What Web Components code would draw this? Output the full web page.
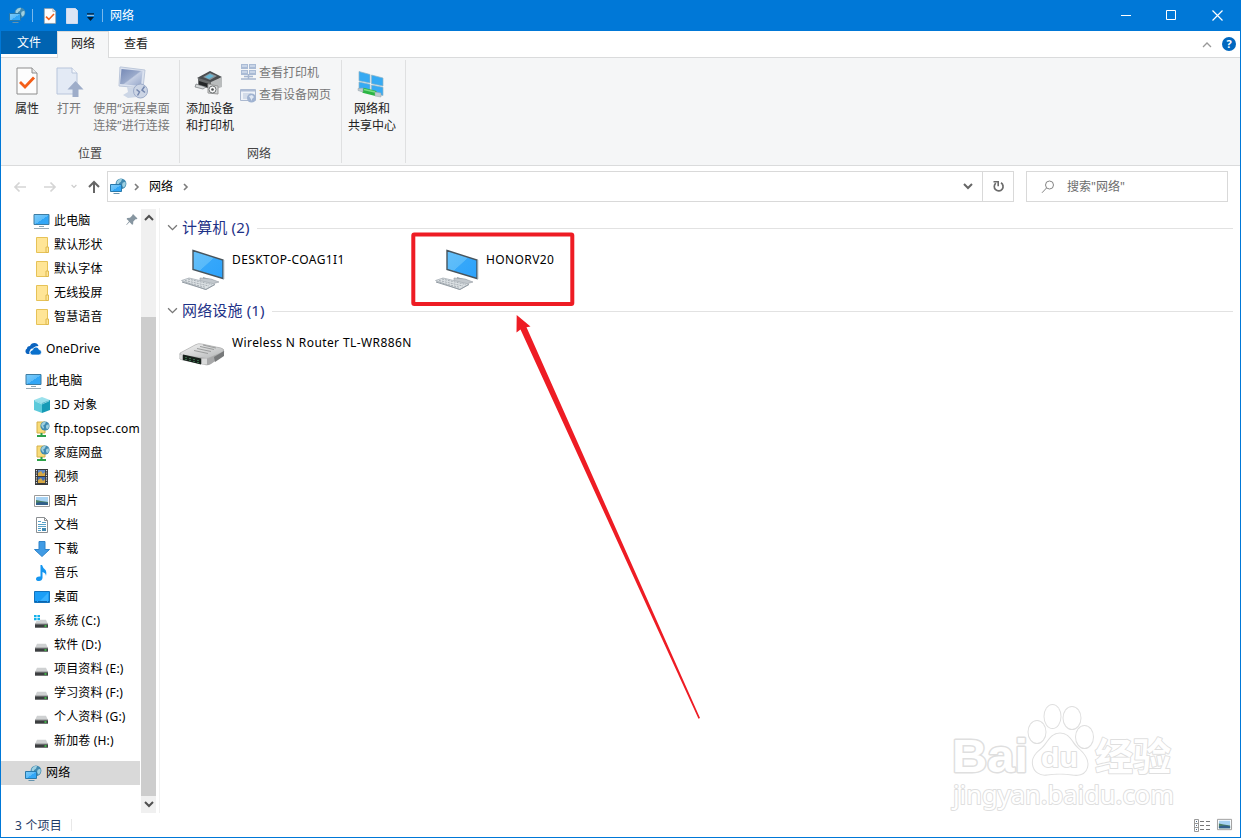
<!DOCTYPE html>
<html lang="zh-CN">
<head>
<meta charset="utf-8">
<title>网络</title>
<style>
  body {
    margin: 0;
    width: 1241px;
    height: 838px;
    overflow: hidden;
    font: 12px/17px "Noto Sans", "Noto Sans CJK SC", sans-serif;
    color: #000;
  }
</style>
</head>
<body>
<explorer-window></explorer-window>

<script>
  // icons, drawn on the pixel grid of their own viewBox: [width, height, markup]
  const drive = '<path d="M3 6.700h9l2 4.300H1z" fill="#cfd1d2"/><path d="M1 11h13v3.700H1z" fill="#3c3e40"/><path d="M1 11h13" stroke="#8d8f91"/><path d="M10.500 13h2" stroke="#3fe04a" stroke-width="1.400"/>';
  const globe = (x, y, r) => `<g transform="translate(${x} ${y}) scale(${r / 5})"><circle r="5" fill="#4089b0"/><path d="M-4-2q2-3 5-2.500L0-2l-2 1.500L-1 2l-1 1-2-3zM1.500-1L4-2q1 3-1 5L2 3.500 1 1z" fill="#9fd0e0"/></g>`;
  const ftp = `<path d="M3 1h8v11H3z" fill="#f8dc79" stroke="#d6b04a"/>${globe(11, 5, 4.6)}<path d="M7.500 12v3M3 15h9" stroke="#2da149" stroke-width="2"/>`;
  const monitor = '<path d="M1 1.500h15v10H1z" fill="url(#g)" stroke="#3e7da3"/><path d="M6 13.500h5" stroke="#8ba5b3"/><path d="M1 15.500h15" stroke="#9aabb5"/>';
  const blue = '<defs><linearGradient id="g" x2="1" y2="1"><stop stop-color="#7cccfb"/><stop offset=".52" stop-color="#5dbcf8"/><stop offset=".53" stop-color="#30a6f6"/><stop offset="1" stop-color="#36a8f7"/></linearGradient></defs>';
  const photo = '<path d="M.5 2.500h15v11H.5z" fill="#fff" stroke="#9b9b9b"/><path d="M2 4h12v8H2z" fill="#a8d3f3"/><path d="M2 7l5 1 7 1v3H2z" fill="#4b8065"/><path d="M2 10q6-2 12 0v2H2z" fill="#315f8b"/>';

  const icons = {
    network: [17, 17, blue + globe(11, 5.800, 5.4) + '<path d="M.5 6.500h11v7H.5z" fill="url(#g)" stroke="#2979aa"/><path d="M3.500 15.500h6" stroke="#6593ae"/>'],
    monitor: [17, 17, blue + monitor],
    folder: [15, 16, '<path d="M2.500.5h11v15h-11z" fill="#ffe596" stroke="#e6c257"/><path d="M12 10h2.500v5.500H12z" fill="#ffe596" stroke="#dfb94e"/>'],
    onedrive: [17, 12, '<path d="M2.500 11a3 3 0 0 1-.5-5.500Q2 3 5 3 6 0 9.500 0q3 0 4 3-4 0-5 2.500Q4 5 4.500 11z" fill="#0a63bf"/><path d="M7 12q-2-.3-2-2.500T7.500 7Q8 4 11 4q2.500 0 3 2.500 2.500.3 2.500 2.700T14 12z" fill="#0a71cd" stroke="#fff" stroke-width=".7"/>'],
    cube: [16, 16, '<path d="M8 0l8 3-8 3-8-3z" fill="#9be1ec"/><path d="M0 3l8 3v10l-8-3z" fill="#5ccadb"/><path d="M16 3L8 6v10l8-3z" fill="#169bb6"/><path d="M1 4l7 3 7-3" stroke="#c8f2f6" fill="none" stroke-width=".6"/>'],
    ftp: [16, 16, ftp],
    video: [15, 16, '<path d="M1 0h13v16H1z" fill="#37393b"/><path d="M4 1h7v6H4z" fill="#608bc8"/><path d="M4 8h7v6H4z" fill="#416db3"/><path d="M4 4l3-2 2 3 2-2v4H4zM4 11l3-2 2 3 2-2v4H4z" fill="#d7a843"/><path d="M2.500 1v14M12.500 1v14" stroke="#d9dbdd" stroke-width="1.200" stroke-dasharray="1.200 1.200"/>'],
    photo: [16, 16, photo],
    doc: [14, 16, '<path d="M1.500.5h8l3 3v12h-11z" fill="#fff" stroke="#8b8f92"/><path d="M9.500.5v3h3" fill="none" stroke="#8b8f92"/><path d="M3 4.500h3M7 5.500h4M3 7.500h8M3 9.500h8M3 11.500h3M3 13.500h3" stroke="#58a2c9"/><path d="M7 11h4v3H7z" fill="#4289b1"/>'],
    down: [16, 16, '<path d="M5 .5h6v8h4.500L8 15.500.5 8.500H5z" fill="#409be4" stroke="#2d83ca"/>'],
    music: [14, 16, '<path d="M7 0q1 3 3 4.500T11 11q0-3-3.500-4v6Q7 16 4 16t-3-2q0-3 4.500-2.500V0z" fill="#1596f0"/>'],
    desktop: [16, 16, '<path d="M.5 2.500h15v11H.5z" fill="#1b9ef7" stroke="#1272bd"/><path d="M6 12l8-8v8z" fill="#38b1ff"/><path d="M1 12.500h14" stroke="#0c65ae" stroke-dasharray="2 1 9 1"/>'],
    drive: [15, 16, drive],
    sysdrive: [15, 16, drive + '<path d="M0 2h6v6H0z" fill="#fff"/><path d="M0 2h2.600v2.300H0zM3.400 2H6v2.300H3.400zM0 5h2.600v2.300H0zM3.400 5H6v2.300H3.400z" fill="#13b1eb"/>'],
    pin: [12, 12, '<path d="M7 0l4.500 4.500-1 .8-1 0L7.300 7.500l-.2 2.700-1 .6L3.500 8 .7 11l-.5-.3L3 7.300.6 5l.6-1L4 3.800 6 1.700z" fill="#8796a1"/>'],
    check: [22, 28, '<path d="M1 1h15l5 5v21H1z" fill="#fdfdfd" stroke="#8d8d8d"/><path d="M16 1v5h5" fill="#e9e9e9" stroke="#8d8d8d"/><path d="M4 15l5 5L18 10.500" fill="none" stroke="#f45e18" stroke-width="2.800"/>'],
    open: [26, 31, '<path d="M1 1h15l5 5v21H1z" fill="#e3eaf5" stroke="#b8c5db"/><path d="M16 1v5h5" fill="#f4f7fc" stroke="#b8c5db"/><path d="M19.500 14l8 8.500h-5V30h-6v-7.500h-5z" fill="#9eadc9"/>'],
    remote: [29, 32, '<defs><linearGradient id="r" x2="1" y2="1"><stop stop-color="#7488b5"/><stop offset=".5" stop-color="#9aaacb"/><stop offset=".55" stop-color="#c4cee3"/><stop offset="1" stop-color="#94a5c9"/></linearGradient></defs><path d="M3 0h1l24 3-2 18-24-2z" fill="#dbe2ef" stroke="#bcc7da"/><path d="M4.500 2l21 2-1.500 15L3 17z" fill="url(#r)"/><path d="M10 20l7 1v5l3 4-9 1-5-3 5-3z" fill="#ccd6e6"/><circle cx="23.500" cy="24" r="7" fill="#ccd5e5" stroke="#9cabc9"/><path d="M19.500 22.500l3 2.500-2 3.500M27.500 19.500l-2.500 3.500 3 2.500" stroke="#7588af" fill="none" stroke-width="1.500"/>'],
    printer: [32, 28, '<path d="M3 8L16 1l12 6-11 7z" fill="#494c4f"/><path d="M9 7l7-4 7 3-7 4z" fill="#89939a"/><path d="M11 7l5-3 4 2-5 3z" fill="#67b7d4"/><path d="M4 8l13 4v7L4 15z" fill="#696c6d"/><path d="M17 12l11-5v10l-11 4z" fill="#b9bcbd"/><path d="M5 11l10 3v4L5 15z" fill="#252728"/><path d="M2 14l10 3-3 2-8-2z" fill="#d4d7d8" stroke="#626669" stroke-width=".6"/><path d="M14 14l10 2v8l-10-1z" fill="#d3d6d7" stroke="#999"/><circle cx="18.500" cy="19.500" r="3.500" fill="#f8f8f8" stroke="#707475"/><circle cx="18.500" cy="19.500" r="1.300" fill="#45494a"/>'],
    printers: [16, 16, '<path d="M1 0h7v5H1zM9 0h7v5H9zM1 6h7v5H1zM9 6h7v5H9z" fill="#aabbd5"/><path d="M2 1h5v2H2zM10 1h5v2h-5zM2 7h5v2H2zM10 7h5v2h-5z" fill="#c9d5e7"/><path d="M8.500 10v5M4 12.500h9M1 15h15" stroke="#a6b6d0" fill="none" stroke-width="1.500"/>'],
    webpage: [16, 13, '<path d="M.5 1.500h15v11H.5z" fill="#eef2f8" stroke="#abb9d0"/><path d="M1 2.500h14" stroke="#aebdd6" stroke-width="2"/><path d="M3 6h8M3 8h6M3 10h5" stroke="#b7c5da"/><circle cx="11.500" cy="10" r="4.500" fill="#a0b3d1"/><path d="M9 8l3-1 2 2-2 2v2z" fill="#e0e8f3"/>'],
    sharing: [28, 27, '<path d="M1 1.500l11 3V13L1 10.800zM13.500 5l11.500 3v8l-11.500-2.300zM1 12l11 2.300v8.200L1 20.500zM13.500 15L25 17.300v8.200l-11.500-2.700z" fill="#36aaf3" stroke="#8fb4c6" stroke-width=".7"/><path d="M5 20.300l13 3.200" stroke="#2bb543" stroke-width="5"/><path d="M6 19.500l11 2.500" stroke="#79dd86" stroke-width="1.300"/><path d="M0 18.500l5-.5v4l-5-1.500zM17 22l6 1v4l-6-1z" fill="#c1cacf" stroke="#97a4ab" stroke-width=".5"/>'],
    pc: [44, 44, '<defs><linearGradient id="p" x1="0" y1="0" x2="1" y2="1"><stop stop-color="#65c0fa"/><stop offset=".47" stop-color="#58bafa"/><stop offset=".48" stop-color="#35a7fa"/><stop offset="1" stop-color="#2ca2fb"/></linearGradient></defs><path d="M22 28l10 3-1 4-9-2z" fill="#9ba6ae"/><path d="M19 29l11 1 8 3-7 2-12-3z" fill="#c2c8cd" stroke="#949ba1" stroke-width=".6"/><path d="M12 1.500l30 9.500v18.500l-30-9z" fill="url(#p)" stroke="#47545d" stroke-width="1.400"/><path d="M42.800 11v19" stroke="#a2aeb5"/><path d="M.5 31.500L8 29l26 6-9.500 5.500z" fill="#dce1e4" stroke="#aab1b7" stroke-width=".8"/><path d="M4 31.500l24 5.500M7 30l24 5.500M1.500 32.800l23 5.500" stroke="#a0a8af" stroke-width=".9" stroke-dasharray="2 1"/><path d="M1 33l24 7.500 9-5" fill="none" stroke="#929ba3"/>'],
    router: [48, 24, '<defs><linearGradient id="t" x2="1" y2="1"><stop stop-color="#f4f4f4"/><stop offset="1" stop-color="#b4b6b7"/></linearGradient></defs><path d="M1 12L17 3q3-2 7-1l19 4q4 1 3 5v2L33 22q-3 2-6 1L3 18q-2-1-2-3z" fill="#a7a8a9"/><path d="M2 11L17 3q3-2 7-1l19 4q4 1 2 4L31 16q-2 1-5 0L3 13z" fill="url(#t)" stroke="#aaa" stroke-width=".6"/><path d="M5 12.500l18 4v6L5 18z" fill="#17201b"/><path d="M1 12l3 1v5l-3-2zM24 16.500h5v6h-5z" fill="#d9dada"/><path d="M8 15v3M12 16v3M16 17v3M20 18v3" stroke="#54af73" stroke-dasharray="1 1"/><path d="M22 4.500l14 3M19 6.500l14 3M16 8.500l14 3M25 3l13 3" stroke="#9b9d9d"/><path d="M36 15l10-6v5l-9 6z" fill="#77797a"/>'],
    back: [14, 12, '<path d="M13 6H2M6.500 1.500L2 6l4.500 4.500" fill="none" stroke="#d5d5d5" stroke-width="1.700"/>'],
    forward: [14, 12, '<path d="M1 6h11M7.500 1.500L12 6l-4.500 4.500" fill="none" stroke="#d5d5d5" stroke-width="1.700"/>'],
    up: [12, 14, '<path d="M6 13V2M1 7l5-5 5 5" fill="none" stroke="#666" stroke-width="2"/>'],
    chevron: [10, 7, '<path d="M1 1l4 4 4-4" fill="none" stroke="currentColor" stroke-width="var(--w, 2)"/>'],
    crumb: [6, 8, '<path d="M1 1l3 3-3 3" fill="none" stroke="#7c7c7c" stroke-width="1.600"/>'],
    refresh: [12, 13, '<path d="M2.800 3.200A4.400 4.400 0 1 0 8 2.800" fill="none" stroke="#6b6b6b" stroke-width="1.700"/><path d="M.5 1.800h4.700v4.400" fill="none" stroke="#6b6b6b" stroke-width="1.600"/>'],
    search: [14, 14, '<circle cx="8.500" cy="5" r="4" fill="none" stroke="#858585"/><path d="M5.500 8L1 12.800" stroke="#858585"/>'],
    caret: [9, 8, '<path d="M1 1h7" stroke="#001c34" stroke-width="1.400"/><path d="M1 4h7L4.500 8z" fill="#001c34"/><path d="M1 2.300h7" stroke="#dcebf8" stroke-width=".8"/>'],
    min: [11, 11, '<path d="M0 5.500h10" stroke="#fff"/>'],
    max: [11, 11, '<path d="M.5.5h9v9h-9z" fill="none" stroke="#fff"/>'],
    close: [11, 11, '<path d="M.5.5l10 10M10.500.5l-10 10" stroke="#fff" stroke-width="1.200"/>'],
    page: [14, 16, '<path d="M1.500.5h9l2 2v13h-11z" fill="#dde5f5" stroke="#d0daee"/>'],
    details: [17, 13, '<path d="M.5.5h4v12h-4zM.5 4.500h4M.5 8.500h4" fill="#fff" stroke="#999"/><path d="M2 2.500h1M2 6.500h1M2 10.500h1" stroke="#4a6a8a"/><path d="M6 2.500h4M12 2.500h4M6 6.500h4M12 6.500h4M6 10.500h4M12 10.500h4" stroke="#777"/>']
  };

  function define(name, css, html) {
    customElements.define(name, class extends HTMLElement {
      constructor() {
        super();
        this.attachShadow({ mode: 'open' });
      }
      connectedCallback() {
        const t = document.createElement('template');
        t.innerHTML = `<style>${css}</style>` + (typeof html === 'function' ? html(this) : html);
        this.shadowRoot.replaceChildren(t.content.cloneNode(true));
      }
    });
  }

  define('app-icon', ':host { display: inline-flex; flex: none } svg { display: block; overflow: visible }', el => {
    const [w, h, body] = icons[el.getAttribute('name')];
    return `<svg width="${el.getAttribute('w') || w}" height="${el.getAttribute('h') || h}" viewBox="0 0 ${w} ${h}">${body}</svg>`;
  });

  define('title-bar', `
    :host { display: flex; height: 31px; background: #0078d7; color: #fff; align-items: center; justify-content: space-between }
    .left { display: flex; align-items: center; padding-left: 9px }
    i { width: 1px; height: 13px; background: #79b8ec; margin: 0 }
    .ctl { display: flex; padding-right: 1px }
    .ctl span { width: 45.500px; display: flex; justify-content: center }
  `, `
    <div class="left">
      <app-icon name="network"></app-icon><i style="margin:0 10px 0 6px"></i>
      <app-icon name="check" w="14" h="16"></app-icon>
      <app-icon name="page" style="margin:0 7px 0 8px"></app-icon>
      <app-icon name="caret" style="margin-top:3px"></app-icon><i style="margin:0 7px"></i><slot></slot>
    </div>
    <div class="ctl">
      <span><app-icon name="min"></app-icon></span>
      <span><app-icon name="max"></app-icon></span>
      <span><app-icon name="close"></app-icon></span>
    </div>
  `);

  define('ribbon-tabs', `
    :host { display: flex; height: 27px; background: #fff; box-shadow: inset 0 -1px #dadbdc }
    div { box-sizing: border-box; text-align: center; line-height: 24px; color: #222 }
    .file { width: 56px; height: 23px; background: #0063b1; color: #fff; line-height: 24px }
    .on { width: 52px; height: 27px; background: #f5f6f7; border: solid #dadbdc; border-width: 1px 1px 0; line-height: 23px }
    .tab { width: 54px; line-height: 25px }
    .right { margin-left: auto; display: flex; align-items: center; gap: 10px; padding: 0 4px 1px 0; color: #999; --w: 1.300 }
    b { width: 14px; height: 14px; border-radius: 7px; background: #0067bf; color: #fff; font: bold 11px/14px "Open Sans", sans-serif; text-align: center }
  `, `
    <div class="file">文件</div><div class="on">网络</div><div class="tab">查看</div>
    <div class="right"><app-icon name="chevron" style="transform:scaleY(-1)"></app-icon><b>?</b></div>
  `);

  define('ribbon-group', `
    :host { display: flex; flex-direction: column; box-sizing: border-box; height: 103px; margin-top: 2px; border-right: 1px solid #dfe0e1 }
    .items { display: flex; flex: 1; gap: 2px; padding: 7px 0 0 var(--pad, 5px) }
    footer { height: 18px; line-height: 17px; text-align: center; color: #444; padding-right: var(--end, 0) }
  `, el => `<div class="items"><slot></slot></div><footer>${el.getAttribute('label') || ''}</footer>`);

  define('ribbon-button', `
    :host { display: flex; flex-direction: column; align-items: center; text-align: center; white-space: nowrap; color: #222 }
    :host([off]) { color: #777 }
    .pic { height: 33px; display: flex; align-items: flex-start }
    :host([low]) .pic { height: 30px; padding-top: 3px }
  `, el => `<div class="pic"><app-icon name="${el.getAttribute('icon')}"></app-icon></div><slot></slot>`);

  define('ribbon-row', `
    :host { display: flex; align-items: center; gap: 3px; height: 22px; color: #777; white-space: nowrap }
  `, el => `<app-icon name="${el.getAttribute('icon')}"></app-icon><slot></slot>`);

  define('ribbon-bar', `
    :host { display: flex; height: 107px; background: #f5f6f7; border-bottom: 1px solid #dadbdc }
    .stack { display: flex; flex-direction: column; margin: -6px 0 0 2px }
  `, `
    <ribbon-group label="位置" style="width:179px">
      <ribbon-button icon="check" style="width:42px">属性</ribbon-button>
      <ribbon-button icon="open" off style="width:38px">打开</ribbon-button>
      <ribbon-button icon="remote" off style="width:83px"><span>使用“远程桌面</span><span>连接”进行连接</span></ribbon-button>
    </ribbon-group>
    <ribbon-group label="网络" style="width:162px;--pad:4px;--end:3px">
      <ribbon-button icon="printer" low style="width:52px"><span>添加设备</span><span>和打印机</span></ribbon-button>
      <div class="stack">
        <ribbon-row icon="printers">查看打印机</ribbon-row>
        <ribbon-row icon="webpage">查看设备网页</ribbon-row>
      </div>
    </ribbon-group>
    <ribbon-group style="width:64px">
      <ribbon-button icon="sharing" low style="width:50px"><span>网络和</span><span>共享中心</span></ribbon-button>
    </ribbon-group>
  `);

  define('address-bar', `
    :host { display: flex; height: 42px; align-items: flex-start; padding: 5px 12px 0 12px; box-sizing: border-box }
    .nav { display: flex; align-items: center; height: 31px; width: 94px }
    .box { display: flex; align-items: center; height: 29px; border: 1px solid #d9d9d9 }
    .path { flex: 1; padding: 0 9px 0 2px }
    .path app-icon:last-child { margin-left: auto; color: #666 }
    .refresh { width: 30px; justify-content: center; border-left: 0 }
    .search { width: 186px; margin-left: 12px; padding-left: 14px; gap: 12px; color: #6d6d6d }
  `, `
    <div class="nav">
      <app-icon name="back"></app-icon>
      <app-icon name="forward" style="margin:0 14px 0 16px"></app-icon>
      <app-icon name="chevron" w="6" h="5" style="color:#ccc;margin-right:11px"></app-icon>
      <app-icon name="up"></app-icon>
    </div>
    <div class="box path">
      <app-icon name="network"></app-icon>
      <app-icon name="crumb" style="margin:0 9px 0 7px"></app-icon>
      <slot></slot>
      <app-icon name="crumb" style="margin-left:10px"></app-icon>
      <app-icon name="chevron"></app-icon>
    </div>
    <div class="box refresh"><app-icon name="refresh" style="margin-left:2px"></app-icon></div>
    <div class="box search"><app-icon name="search"></app-icon>搜索"网络"</div>
  `);

  define('nav-item', `
    :host { display: flex; align-items: center; box-sizing: border-box; height: 24px; padding: 0 0 2px 32px; white-space: nowrap; letter-spacing: .15px }
    :host([top]) { padding-left: 24px }
    :host([gap]) { margin-top: 8px }
    :host([on]) { background: #d9d9d9 }
    span { width: 17px; margin: 2px 4px 0 0; display: flex; justify-content: center }
    .pin { margin-left: auto; margin-right: 2px }
  `, el => `
    <span><app-icon name="${el.getAttribute('icon')}"></app-icon></span><slot></slot>
    ${el.hasAttribute('pinned') ? '<app-icon class="pin" name="pin"></app-icon>' : ''}
  `);

  define('nav-pane', `
    :host { display: flex; width: 158px; border-right: 1px solid #f1f1f1 }
    nav { width: 139px; margin-right: 1px; padding-top: 1px; overflow: hidden }
    .bar { width: 15px; margin-top: 1px; background: #f0f0f0; display: flex; flex-direction: column; align-items: center; color: #505050 }
    .bar app-icon { height: 17px; align-items: center }
    .thumb { width: 15px; height: 480px; background: #cdcdcd; margin-top: 91px }
  `, `
    <nav>
      <nav-item icon="monitor" pinned>此电脑</nav-item>
      <nav-item icon="folder">默认形状</nav-item>
      <nav-item icon="folder">默认字体</nav-item>
      <nav-item icon="folder">无线投屏</nav-item>
      <nav-item icon="folder">智慧语音</nav-item>
      <nav-item icon="onedrive" top gap>OneDrive</nav-item>
      <nav-item icon="monitor" top gap>此电脑</nav-item>
      <nav-item icon="cube">3D 对象</nav-item>
      <nav-item icon="ftp">ftp.topsec.com</nav-item>
      <nav-item icon="ftp">家庭网盘</nav-item>
      <nav-item icon="video">视频</nav-item>
      <nav-item icon="photo">图片</nav-item>
      <nav-item icon="doc">文档</nav-item>
      <nav-item icon="down">下载</nav-item>
      <nav-item icon="music">音乐</nav-item>
      <nav-item icon="desktop">桌面</nav-item>
      <nav-item icon="sysdrive">系统 (C:)</nav-item>
      <nav-item icon="drive">软件 (D:)</nav-item>
      <nav-item icon="drive">项目资料 (E:)</nav-item>
      <nav-item icon="drive">学习资料 (F:)</nav-item>
      <nav-item icon="drive">个人资料 (G:)</nav-item>
      <nav-item icon="drive">新加卷 (H:)</nav-item>
      <nav-item icon="network" top gap on>网络</nav-item>
    </nav>
    <div class="bar">
      <app-icon name="chevron" style="transform:scaleY(-1)"></app-icon>
      <div class="thumb"></div>
      <app-icon name="chevron"></app-icon>
    </div>
  `);

  define('file-group', `
    :host { display: block; height: 83px }
    header { display: flex; height: 24px; font-size: 15px; line-height: 22px; color: #1e3287; letter-spacing: .15px }
    header app-icon { color: #777; --w: 1.200; margin: 8px 4px 0 -1px }
    hr { flex: 1; border: 0; height: 1px; background: #e2e2e2; margin: 12px 0 0 7px }
    .tiles { display: flex; padding-top: 8px }
  `, el => `
    <header><app-icon name="chevron" w="11" h="8"></app-icon>${el.getAttribute('label')}<hr></header>
    <div class="tiles"><slot></slot></div>
  `);

  define('file-tile', `
    :host { display: flex; width: 254px; height: 46px; white-space: nowrap; letter-spacing: .4px }
    .pic { width: 53px; display: flex; align-items: center; justify-content: center; margin-left: 8px; margin-right: 3px }
    :host([icon=router]) .pic { margin-left: 7px; margin-right: 4px }
    span { padding-top: 3px }
  `, el => `<div class="pic"><app-icon name="${el.getAttribute('icon')}"></app-icon></div><span><slot></slot></span>`);

  define('status-bar', `
    :host { display: flex; align-items: center; justify-content: space-between; height: 24px; padding: 0 8px 0 14px; color: #1f3c66; letter-spacing: .2px }
    div { display: flex; align-items: center; gap: 6px }
    i { width: 1px; height: 12px; background: #e8e8e8; margin-left: 3px }
  `, `
    <div><slot></slot><i></i></div>
    <div><app-icon name="details"></app-icon><app-icon name="photo" w="15" h="15" style="margin-bottom:1px"></app-icon></div>
  `);

  // red box and arrow laid over the window
  define('call-out', ':host { position: absolute; left: 411px; top: 232px } svg { display: block }', `
    <svg width="300" height="500" viewBox="411 232 300 500">
      <rect x="413.300" y="234.500" width="159" height="69.500" rx="1" fill="none" stroke="#ee1c24" stroke-width="4"/>
      <path d="M516.700 315l13.800 11.500-4 .8L700 718l-1.500.8L520.500 329.500l-4 3z" fill="#ee1c24"/>
    </svg>
  `);

  define('water-mark', `
    :host { position: absolute; left: 940px; top: 695px }
    svg { display: block }
    text, path, ellipse { fill: #fff; stroke: #dfdfdf; stroke-width: 2; paint-order: stroke; stroke-linejoin: round }
    text { font-family: "Liberation Sans", "Noto Sans CJK SC", sans-serif; font-weight: bold }
  `, `
    <svg width="245" height="125" viewBox="940 695 245 125">
      <text x="952" y="772" font-size="47" textLength="76" lengthAdjust="spacingAndGlyphs" style="stroke-width:3">Bai</text>
      <ellipse cx="1037" cy="732" rx="8.500" ry="11"/>
      <ellipse cx="1052.500" cy="716.500" rx="8" ry="11.500"/>
      <ellipse cx="1072" cy="718" rx="8.500" ry="11"/>
      <ellipse cx="1084.500" cy="737" rx="8.500" ry="11"/>
      <path d="M1060 733.500c10 0 11 9 18 15s11 12 9 19-9 8-15 7-18-1-25 0-13-3-14-10 3-11 9-16 8-15 18-15z"/>
      <text x="1041" y="767" font-size="28" textLength="37" lengthAdjust="spacingAndGlyphs">du</text>
      <text x="1095" y="770" font-size="38">经验</text>
      <text x="953" y="804" font-size="25" textLength="221" lengthAdjust="spacingAndGlyphs" style="font-family:'Noto Sans',sans-serif;font-weight:normal">jingyan.baidu.com</text>
    </svg>
  `);

  define('explorer-window', `
    :host { display: flex; flex-direction: column; position: relative; width: 1241px; height: 838px; background: #fff }
    .frame { display: flex; flex-direction: column; flex: 1; border: solid #0078d7; border-width: 0 1px 1px }
    .body { display: flex; height: 605px }
    main { flex: 1; padding: 8px 7px 0 8px }
    title-bar { margin: 0 -1px 0 -1px }
  `, `
    <div class="frame">
      <title-bar>网络</title-bar>
      <ribbon-tabs></ribbon-tabs>
      <ribbon-bar></ribbon-bar>
      <address-bar>网络</address-bar>
      <div class="body">
        <nav-pane></nav-pane>
        <main>
          <file-group label="计算机 (2)">
            <file-tile icon="pc">DESKTOP-COAG1I1</file-tile>
            <file-tile icon="pc">HONORV20</file-tile>
          </file-group>
          <file-group label="网络设施 (1)">
            <file-tile icon="router">Wireless N Router TL-WR886N</file-tile>
          </file-group>
        </main>
      </div>
      <status-bar>3 个项目</status-bar>
    </div>
    <water-mark></water-mark>
    <call-out></call-out>
  `);
</script>
</body>
</html>
